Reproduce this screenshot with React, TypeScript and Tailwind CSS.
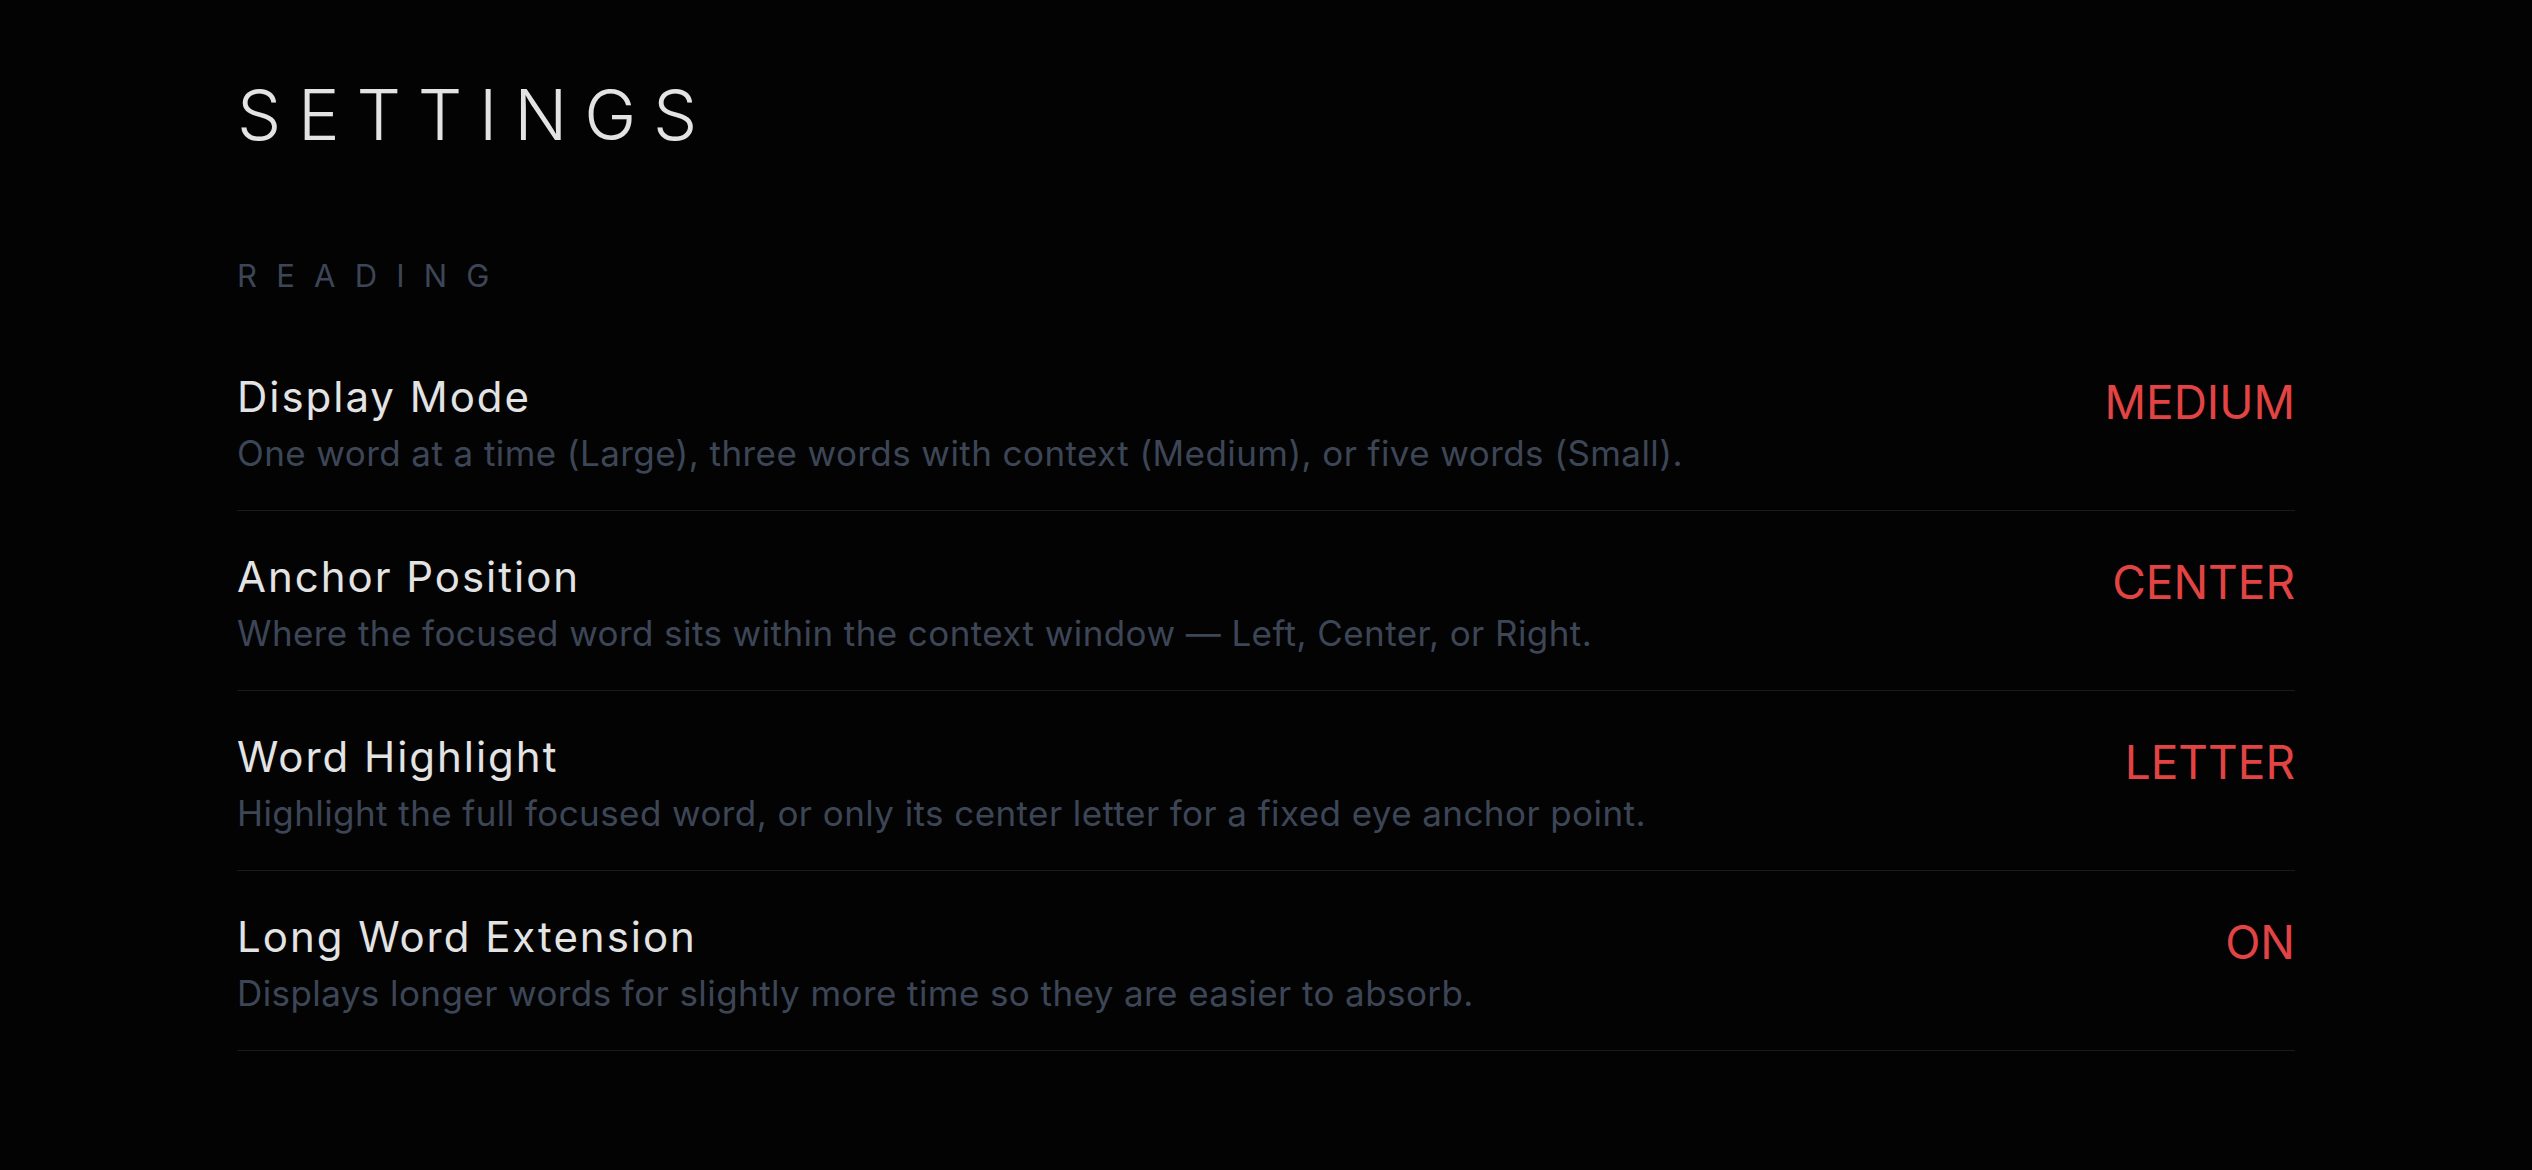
const settings = [
  {
    title: "Display Mode",
    desc: "One word at a time (Large), three words with context (Medium), or five words (Small).",
    value: "MEDIUM",
  },
  {
    title: "Anchor Position",
    desc: "Where the focused word sits within the context window — Left, Center, or Right.",
    value: "CENTER",
  },
  {
    title: "Word Highlight",
    desc: "Highlight the full focused word, or only its center letter for a fixed eye anchor point.",
    value: "LETTER",
  },
  {
    title: "Long Word Extension",
    desc: "Displays longer words for slightly more time so they are easier to absorb.",
    value: "ON",
  },
];

function SettingRow({ title, desc, value }: { title: string; desc: string; value: string }) {
  return (
    <div className="flex items-start justify-between gap-8 border-b border-[#1a1a1a] pt-[45px] pb-[39px]">
      <div className="flex flex-col gap-[18px]">
        <span className="text-[42px] leading-none tracking-[0.047em] text-[#e3e3e3]">{title}</span>
        <span className="text-[35px] leading-none tracking-[0.012em] text-[#3d4657]">{desc}</span>
      </div>
      <span className="mt-[3px] text-[46px] leading-none text-[#e24343]">{value}</span>
    </div>
  );
}

export default function App() {
  return (
    <div className="flex h-[1170px] flex-col overflow-hidden bg-[#030303] px-[237px] pb-[71px] font-['Inter',sans-serif]">
      <h1 className="pt-[80px] text-[70px] font-light leading-none tracking-[0.24em] text-[#e3e3e3]">
        SETTINGS
      </h1>
      <h2 className="mt-[110px] text-[31px] leading-none tracking-[0.62em] text-[#3d4657]">READING</h2>
      <div className="mt-[40px] min-h-0 flex-1 overflow-hidden">
        {settings.map((s) => (
          <SettingRow key={s.title} {...s} />
        ))}
      </div>
    </div>
  );
}
